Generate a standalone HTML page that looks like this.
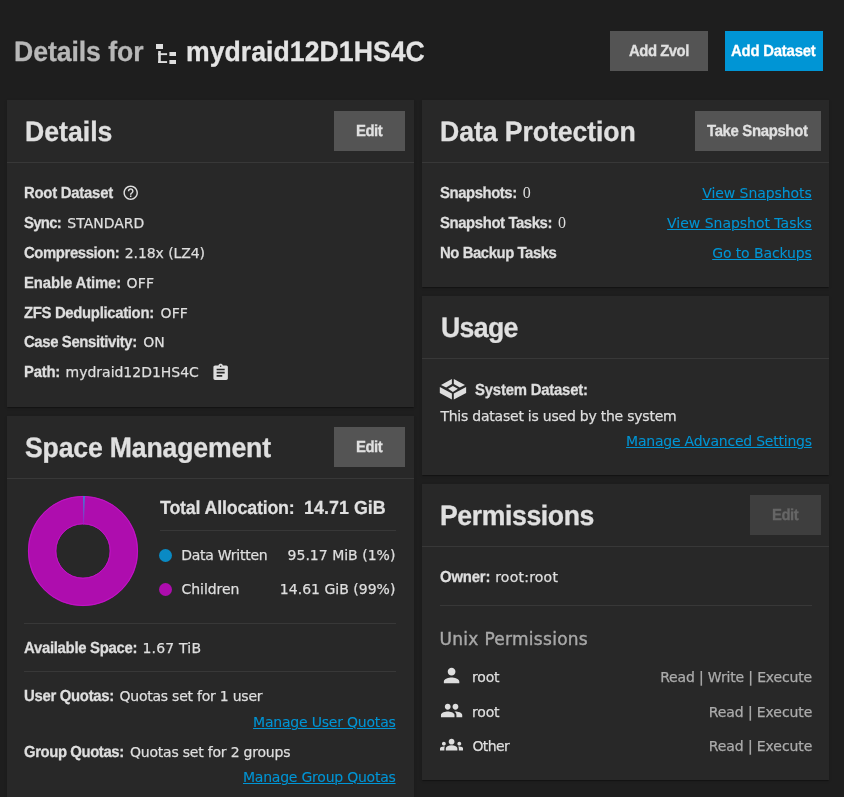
<!DOCTYPE html>
<html lang="en"><head><meta charset="utf-8"><title>Details for mydraid12D1HS4C</title>
<style>
html,body{margin:0;padding:0;}
body{width:844px;height:797px;overflow:hidden;background:#1e1e1e;position:relative;font-family:'Liberation Sans',sans-serif;}
h1,h3,h4,strong,a,i{margin:0;padding:0;font-style:normal;}
.r{position:absolute;display:block;box-sizing:border-box;margin:0;padding:0;}
.t{position:absolute;display:block;white-space:nowrap;line-height:20px;}
#w{position:absolute;left:0;top:0;width:844px;height:797px;will-change:transform;}
.card{background:#282828;box-shadow:0 2px 1px -1px rgba(0,0,0,.2),0 1px 1px 0 rgba(0,0,0,.14),0 1px 3px 0 rgba(0,0,0,.12);}
.b{border:0;border-radius:0;cursor:pointer;font:inherit;overflow:visible;}
.b[disabled]{cursor:default;}
a{cursor:pointer;}
</style></head><body><main id="w">
  <header class="r" style="left:0px;top:20px;width:844px;height:70px;">
    <h1 class="r" style="left:10px;top:16px;width:430px;height:40px;">
      <span class="t" style="left:3.77px;top:6px;font-family:'Liberation Sans',sans-serif;font-size:28px;color:#b8b8b8;font-weight:700;text-rendering:geometricPrecision;letter-spacing:-0.061px;transform-origin:0 0;transform:scaleX(0.95);-webkit-text-stroke:0.3px #b8b8b8;">Details for</span>
      <svg class="r" style="left:140px;top:0px" width="36" height="34" viewBox="150 36 36 34" aria-hidden="true"><g fill="#dedede"><rect x="156" y="44" width="7" height="5"/><rect x="158.2" y="51" width="2.6" height="12"/><rect x="158.2" y="53.2" width="8.9" height="1.9"/><rect x="158.2" y="61.1" width="8.9" height="1.9"/><rect x="169.4" y="52" width="6.6" height="4"/><rect x="169.4" y="60" width="6.6" height="4"/></g></svg>
      <span class="t" style="left:176.17px;top:6px;font-family:'Liberation Sans',sans-serif;font-size:28px;color:#e4e4e4;font-weight:700;text-rendering:geometricPrecision;letter-spacing:0.055px;transform-origin:0 0;transform:scaleX(0.95);-webkit-text-stroke:0.3px #e4e4e4;">mydraid12D1HS4C</span>
    </h1>
    <button class="r b" type="button" style="left:610px;top:11px;width:98px;height:40px;background:#545454;">
      <span class="t" style="left:18.7px;top:11px;font-family:'Liberation Sans',sans-serif;font-size:16px;color:#e0e0e0;font-weight:700;text-rendering:geometricPrecision;letter-spacing:-0.505px;transform-origin:0 0;transform:scaleX(0.93);-webkit-text-stroke:0.3px #e0e0e0;">Add Zvol</span>
    </button>
    <button class="r b" type="button" style="left:725px;top:11px;width:98px;height:40px;background:#0095d5;">
      <span class="t" style="left:6.3px;top:11px;font-family:'Liberation Sans',sans-serif;font-size:16px;color:#ffffff;font-weight:700;text-rendering:geometricPrecision;letter-spacing:-0.219px;transform-origin:0 0;transform:scaleX(0.93);-webkit-text-stroke:0.3px #ffffff;">Add Dataset</span>
    </button>
  </header>
  <section class="r card" style="left:7px;top:100px;width:407px;height:307px;">
    <h3 class="t" style="left:18.07px;top:22px;font-family:'Liberation Sans',sans-serif;font-size:28px;color:#e0e0e0;font-weight:700;text-rendering:geometricPrecision;letter-spacing:0.032px;transform-origin:0 0;transform:scaleX(0.95);-webkit-text-stroke:0.3px #e0e0e0;">Details</h3>
    <div class="r" style="left:0px;top:62px;width:407px;height:1px;background:#383838;"></div>
    <button class="r b" type="button" style="left:327px;top:11px;width:71px;height:40px;background:#545454;">
      <span class="t" style="left:21.62px;top:11px;font-family:'Liberation Sans',sans-serif;font-size:16px;color:#e0e0e0;font-weight:700;text-rendering:geometricPrecision;letter-spacing:-0.519px;transform-origin:0 0;transform:scaleX(0.93);-webkit-text-stroke:0.3px #e0e0e0;">Edit</span>
    </button>
    <div class="r row" style="left:17px;top:83px;width:372px;height:20px;">
      <strong class="t" style="left:-0.28px;top:1px;font-family:'Liberation Sans',sans-serif;font-size:16px;color:#dedede;font-weight:700;text-rendering:geometricPrecision;letter-spacing:-0.259px;transform-origin:0 0;transform:scaleX(0.93);-webkit-text-stroke:0.3px #dedede;">Root Dataset</strong>
      <svg class="r" style="left:98.2px;top:0.9px" width="17.4" height="17.4" viewBox="0 0 24 24" aria-hidden="true"><path fill="#dedede" d="M11 18h2v-2h-2v2zm1-16C6.48 2 2 6.48 2 12s4.48 10 10 10 10-4.48 10-10S17.52 2 12 2zm0 18c-4.41 0-8-3.59-8-8s3.59-8 8-8 8 3.59 8 8-3.590 8-8 8zm0-14c-2.210 0-4 1.790-4 4h2c0-1.100.9-2 2-2s2 .9 2 2c0 2-3 1.750-3 5h2c0-2.250 3-2.500 3-5 0-2.210-1.790-4-4-4z"/></svg>
    </div>
    <div class="r row" style="left:17px;top:113px;width:372px;height:20px;">
      <strong class="t" style="left:0.18px;top:1px;font-family:'Liberation Sans',sans-serif;font-size:16px;color:#dedede;font-weight:700;text-rendering:geometricPrecision;letter-spacing:-0.773px;transform-origin:0 0;transform:scaleX(0.93);-webkit-text-stroke:0.3px #dedede;">Sync:</strong>
      <span class="t" style="left:43.35px;top:0px;font-family:'DejaVu Sans','Liberation Sans',sans-serif;font-size:14px;color:#dedede;font-weight:400;-webkit-text-stroke:0.25px #dedede;">STANDARD</span>
    </div>
    <div class="r row" style="left:17px;top:143px;width:372px;height:20px;">
      <strong class="t" style="left:0.07px;top:1px;font-family:'Liberation Sans',sans-serif;font-size:16px;color:#dedede;font-weight:700;text-rendering:geometricPrecision;letter-spacing:-0.428px;transform-origin:0 0;transform:scaleX(0.93);-webkit-text-stroke:0.3px #dedede;">Compression:</strong>
      <span class="t" style="left:100.73px;top:0px;font-family:'DejaVu Sans','Liberation Sans',sans-serif;font-size:14px;color:#dedede;font-weight:400;letter-spacing:-0.083px;-webkit-text-stroke:0.25px #dedede;">2.18x (LZ4)</span>
    </div>
    <div class="r row" style="left:17px;top:173px;width:372px;height:20px;">
      <strong class="t" style="left:-0.28px;top:1px;font-family:'Liberation Sans',sans-serif;font-size:16px;color:#dedede;font-weight:700;text-rendering:geometricPrecision;letter-spacing:-0.130px;transform-origin:0 0;transform:scaleX(0.93);-webkit-text-stroke:0.3px #dedede;">Enable Atime:</strong>
      <span class="t" style="left:102.48px;top:0px;font-family:'DejaVu Sans','Liberation Sans',sans-serif;font-size:14px;color:#dedede;font-weight:400;letter-spacing:0.212px;-webkit-text-stroke:0.25px #dedede;">OFF</span>
    </div>
    <div class="r row" style="left:17px;top:203px;width:372px;height:20px;">
      <strong class="t" style="left:0.18px;top:1px;font-family:'Liberation Sans',sans-serif;font-size:16px;color:#dedede;font-weight:700;text-rendering:geometricPrecision;letter-spacing:-0.346px;transform-origin:0 0;transform:scaleX(0.93);-webkit-text-stroke:0.3px #dedede;">ZFS Deduplication:</strong>
      <span class="t" style="left:136.58px;top:0px;font-family:'DejaVu Sans','Liberation Sans',sans-serif;font-size:14px;color:#dedede;font-weight:400;letter-spacing:0.112px;-webkit-text-stroke:0.25px #dedede;">OFF</span>
    </div>
    <div class="r row" style="left:17px;top:232px;width:372px;height:20px;">
      <strong class="t" style="left:0.07px;top:1px;font-family:'Liberation Sans',sans-serif;font-size:16px;color:#dedede;font-weight:700;text-rendering:geometricPrecision;letter-spacing:-0.399px;transform-origin:0 0;transform:scaleX(0.93);-webkit-text-stroke:0.3px #dedede;">Case Sensitivity:</strong>
      <span class="t" style="left:119.18px;top:0px;font-family:'DejaVu Sans','Liberation Sans',sans-serif;font-size:14px;color:#dedede;font-weight:400;letter-spacing:-0.025px;-webkit-text-stroke:0.25px #dedede;">ON</span>
    </div>
    <div class="r row" style="left:17px;top:262px;width:372px;height:20px;">
      <strong class="t" style="left:-0.28px;top:1px;font-family:'Liberation Sans',sans-serif;font-size:16px;color:#dedede;font-weight:700;text-rendering:geometricPrecision;letter-spacing:-0.256px;transform-origin:0 0;transform:scaleX(0.93);-webkit-text-stroke:0.3px #dedede;">Path:</strong>
      <span class="t" style="left:41.58px;top:0px;font-family:'DejaVu Sans','Liberation Sans',sans-serif;font-size:14px;color:#dedede;font-weight:400;letter-spacing:-0.018px;-webkit-text-stroke:0.25px #dedede;">mydraid12D1HS4C</span>
      <svg class="r" style="left:187.3px;top:0.5px" width="19.3" height="19.3" viewBox="0 0 24 24" aria-hidden="true"><path fill="#dedede" d="M19 3h-4.180C14.400 1.840 13.300 1 12 1c-1.300 0-2.400.840-2.820 2H5c-1.100 0-2 .9-2 2v14c0 1.100.9 2 2 2h14c1.100 0 2-.9 2-2V5c0-1.100-.9-2-2-2zm-7 0c.550 0 1 .450 1 1s-.450 1-1 1-1-.450-1-1 .450-1 1-1zm2 14H7v-2h7v2zm3-4H7v-2h10v2zm0-4H7V7h10v2z"/></svg>
    </div>
  </section>
  <section class="r card" style="left:7px;top:416px;width:407px;height:400px;">
    <h3 class="t" style="left:18.22px;top:22px;font-family:'Liberation Sans',sans-serif;font-size:28px;color:#e0e0e0;font-weight:700;text-rendering:geometricPrecision;letter-spacing:-0.163px;transform-origin:0 0;transform:scaleX(0.95);-webkit-text-stroke:0.3px #e0e0e0;">Space Management</h3>
    <div class="r" style="left:0px;top:62px;width:407px;height:1px;background:#383838;"></div>
    <button class="r b" type="button" style="left:327px;top:11px;width:71px;height:40px;background:#545454;">
      <span class="t" style="left:21.62px;top:11px;font-family:'Liberation Sans',sans-serif;font-size:16px;color:#e0e0e0;font-weight:700;text-rendering:geometricPrecision;letter-spacing:-0.519px;transform-origin:0 0;transform:scaleX(0.93);-webkit-text-stroke:0.3px #e0e0e0;">Edit</span>
    </button>
    <svg class="r" style="left:16px;top:75px" width="120" height="120" viewBox="23 491 120 120" aria-hidden="true"><defs><linearGradient id="sl" x1="0" y1="0" x2="0" y2="1"><stop offset="0" stop-color="#3a80d0"/><stop offset="0.5" stop-color="#6a55c8"/><stop offset="1" stop-color="#a01cc0"/></linearGradient></defs>
<circle cx="83" cy="551" r="40.9" fill="none" stroke="#ae0dae" stroke-width="28.3"/>
<circle cx="83" cy="551" r="54.6" fill="none" stroke="#c414ca" stroke-width="0.9"/>
<circle cx="83" cy="551" r="27.2" fill="none" stroke="#c414ca" stroke-width="0.9"/>
<path d="M83.05 496 L84.95 496.05 L83.9 524.4 L83.05 524.4 Z" fill="url(#sl)"/></svg>
    <div class="r legend" style="left:152px;top:80px;width:238px;height:106px;">
      <strong class="t" style="left:0.76px;top:3px;font-family:'Liberation Sans',sans-serif;font-size:19px;color:#e0e0e0;font-weight:700;text-rendering:geometricPrecision;letter-spacing:-0.208px;transform-origin:0 0;transform:scaleX(0.94);-webkit-text-stroke:0.2px #e0e0e0;">Total Allocation:</strong>
      <strong class="t" style="left:144.94px;top:3px;font-family:'Liberation Sans',sans-serif;font-size:19px;color:#e0e0e0;font-weight:700;text-rendering:geometricPrecision;letter-spacing:0.048px;transform-origin:0 0;transform:scaleX(0.94);-webkit-text-stroke:0.2px #e0e0e0;">14.71 GiB</strong>
      <div class="r" style="left:1px;top:34px;width:236px;height:1px;background:#383838;"></div>
      <i class="r" style="left:0.2px;top:52.7px;width:13px;height:13px;background:#0a8ac4;border-radius:50%;"></i>
      <i class="r" style="left:0.2px;top:86.6px;width:13px;height:13px;background:#ae0dae;border-radius:50%;"></i>
      <span class="t" style="left:22.15px;top:49px;font-family:'DejaVu Sans','Liberation Sans',sans-serif;font-size:14px;color:#dedede;font-weight:400;letter-spacing:-0.243px;-webkit-text-stroke:0.25px #dedede;">Data Written</span>
      <span class="t" style="left:128.55px;top:49px;font-family:'DejaVu Sans','Liberation Sans',sans-serif;font-size:14px;color:#dedede;font-weight:400;letter-spacing:0.010px;-webkit-text-stroke:0.25px #dedede;">95.17 MiB (1%)</span>
      <span class="t" style="left:22.58px;top:83px;font-family:'DejaVu Sans','Liberation Sans',sans-serif;font-size:14px;color:#dedede;font-weight:400;letter-spacing:-0.075px;-webkit-text-stroke:0.25px #dedede;">Children</span>
      <span class="t" style="left:120.82px;top:83px;font-family:'DejaVu Sans','Liberation Sans',sans-serif;font-size:14px;color:#dedede;font-weight:400;letter-spacing:0.016px;-webkit-text-stroke:0.25px #dedede;">14.61 GiB (99%)</span>
    </div>
    <div class="r" style="left:17px;top:207px;width:372px;height:1px;background:#383838;"></div>
    <div class="r row" style="left:17px;top:222px;width:372px;height:20px;">
      <strong class="t" style="left:0.3px;top:1px;font-family:'Liberation Sans',sans-serif;font-size:16px;color:#dedede;font-weight:700;text-rendering:geometricPrecision;letter-spacing:-0.307px;transform-origin:0 0;transform:scaleX(0.93);-webkit-text-stroke:0.3px #dedede;">Available Space:</strong>
      <span class="t" style="left:118.43px;top:0px;font-family:'DejaVu Sans','Liberation Sans',sans-serif;font-size:14px;color:#dedede;font-weight:400;letter-spacing:0.200px;-webkit-text-stroke:0.25px #dedede;">1.67 TiB</span>
    </div>
    <div class="r" style="left:17px;top:255px;width:372px;height:1px;background:#383838;"></div>
    <div class="r row" style="left:17px;top:270px;width:372px;height:50px;">
      <strong class="t" style="left:-0.28px;top:1px;font-family:'Liberation Sans',sans-serif;font-size:16px;color:#dedede;font-weight:700;text-rendering:geometricPrecision;letter-spacing:-0.315px;transform-origin:0 0;transform:scaleX(0.93);-webkit-text-stroke:0.3px #dedede;">User Quotas:</strong>
      <span class="t" style="left:95.48px;top:0px;font-family:'DejaVu Sans','Liberation Sans',sans-serif;font-size:14px;color:#dedede;font-weight:400;letter-spacing:-0.232px;-webkit-text-stroke:0.25px #dedede;">Quotas set for 1 user</span>
      <a class="t" style="left:229.1px;top:26px;font-family:'DejaVu Sans','Liberation Sans',sans-serif;font-size:14px;color:#0095d5;font-weight:400;letter-spacing:-0.208px;-webkit-text-stroke:0.08px #0095d5;text-decoration:underline;text-decoration-thickness:1.4px;">Manage User Quotas</a>
    </div>
    <div class="r row" style="left:17px;top:326px;width:372px;height:50px;">
      <strong class="t" style="left:0.07px;top:1px;font-family:'Liberation Sans',sans-serif;font-size:16px;color:#dedede;font-weight:700;text-rendering:geometricPrecision;letter-spacing:-0.437px;transform-origin:0 0;transform:scaleX(0.93);-webkit-text-stroke:0.3px #dedede;">Group Quotas:</strong>
      <span class="t" style="left:105.97px;top:0px;font-family:'DejaVu Sans','Liberation Sans',sans-serif;font-size:14px;color:#dedede;font-weight:400;letter-spacing:-0.209px;-webkit-text-stroke:0.25px #dedede;">Quotas set for 2 groups</span>
      <a class="t" style="left:219px;top:25px;font-family:'DejaVu Sans','Liberation Sans',sans-serif;font-size:14px;color:#0095d5;font-weight:400;letter-spacing:-0.229px;-webkit-text-stroke:0.08px #0095d5;text-decoration:underline;text-decoration-thickness:1.4px;">Manage Group Quotas</a>
    </div>
  </section>
  <section class="r card" style="left:422px;top:100px;width:407px;height:187px;">
    <h3 class="t" style="left:18.37px;top:22px;font-family:'Liberation Sans',sans-serif;font-size:28px;color:#e0e0e0;font-weight:700;text-rendering:geometricPrecision;letter-spacing:-0.059px;transform-origin:0 0;transform:scaleX(0.95);-webkit-text-stroke:0.3px #e0e0e0;">Data Protection</h3>
    <div class="r" style="left:0px;top:62px;width:407px;height:1px;background:#383838;"></div>
    <button class="r b" type="button" style="left:273px;top:11px;width:126px;height:40px;background:#545454;">
      <span class="t" style="left:11.83px;top:11px;font-family:'Liberation Sans',sans-serif;font-size:16px;color:#e0e0e0;font-weight:700;text-rendering:geometricPrecision;letter-spacing:-0.347px;transform-origin:0 0;transform:scaleX(0.93);-webkit-text-stroke:0.3px #e0e0e0;">Take Snapshot</span>
    </button>
    <div class="r row" style="left:18px;top:83px;width:372px;height:20px;">
      <strong class="t" style="left:-0.12px;top:1px;font-family:'Liberation Sans',sans-serif;font-size:16px;color:#dedede;font-weight:700;text-rendering:geometricPrecision;letter-spacing:-0.459px;transform-origin:0 0;transform:scaleX(0.93);-webkit-text-stroke:0.3px #dedede;">Snapshots:</strong>
      <span class="t" style="left:82.67px;top:0px;font-family:'Liberation Serif',serif;font-size:16px;color:#dedede;font-weight:400;">0</span>
      <a class="t" style="left:262.2px;top:0px;font-family:'DejaVu Sans','Liberation Sans',sans-serif;font-size:14px;color:#0095d5;font-weight:400;letter-spacing:-0.059px;-webkit-text-stroke:0.08px #0095d5;text-decoration:underline;text-decoration-thickness:1.4px;">View Snapshots</a>
    </div>
    <div class="r row" style="left:18px;top:113px;width:372px;height:20px;">
      <strong class="t" style="left:-0.12px;top:1px;font-family:'Liberation Sans',sans-serif;font-size:16px;color:#dedede;font-weight:700;text-rendering:geometricPrecision;letter-spacing:-0.423px;transform-origin:0 0;transform:scaleX(0.93);-webkit-text-stroke:0.3px #dedede;">Snapshot Tasks:</strong>
      <span class="t" style="left:117.98px;top:0px;font-family:'Liberation Serif',serif;font-size:16px;color:#dedede;font-weight:400;">0</span>
      <a class="t" style="left:227.1px;top:0px;font-family:'DejaVu Sans','Liberation Sans',sans-serif;font-size:14px;color:#0095d5;font-weight:400;letter-spacing:-0.021px;-webkit-text-stroke:0.08px #0095d5;text-decoration:underline;text-decoration-thickness:1.4px;">View Snapshot Tasks</a>
    </div>
    <div class="r row" style="left:18px;top:143px;width:372px;height:20px;">
      <strong class="t" style="left:-0.38px;top:1px;font-family:'Liberation Sans',sans-serif;font-size:16px;color:#dedede;font-weight:700;text-rendering:geometricPrecision;letter-spacing:-0.465px;transform-origin:0 0;transform:scaleX(0.93);-webkit-text-stroke:0.3px #dedede;">No Backup Tasks</strong>
      <a class="t" style="left:272.2px;top:0px;font-family:'DejaVu Sans','Liberation Sans',sans-serif;font-size:14px;color:#0095d5;font-weight:400;letter-spacing:-0.106px;-webkit-text-stroke:0.08px #0095d5;text-decoration:underline;text-decoration-thickness:1.4px;">Go to Backups</a>
    </div>
  </section>
  <section class="r card" style="left:422px;top:296px;width:407px;height:179px;">
    <h3 class="t" style="left:18.51px;top:22px;font-family:'Liberation Sans',sans-serif;font-size:28px;color:#e0e0e0;font-weight:700;text-rendering:geometricPrecision;letter-spacing:-0.661px;transform-origin:0 0;transform:scaleX(0.95);-webkit-text-stroke:0.3px #e0e0e0;">Usage</h3>
    <div class="r" style="left:0px;top:62px;width:407px;height:1px;background:#383838;"></div>
    <div class="r row" style="left:10px;top:76px;width:380px;height:36px;">
      <svg class="r" style="left:0px;top:0px" width="40" height="36" viewBox="432 372 40 36" aria-hidden="true"><g fill="#dedede"><polygon points="441,384.9 451.9,378.9 451.9,384 446.2,387.6"/><polygon points="453.8,378.9 465,384.9 459.8,387.6 453.8,384"/><polygon points="452.9,386 457.9,388.8 452.9,391.9 448.1,388.8"/><polygon points="439.8,386.9 451.9,393.6 451.9,399.5 439.8,392.9"/><polygon points="453.8,393.6 466.1,386.9 466.1,392.9 453.8,399.5"/></g></svg>
      <strong class="t" style="left:43.29px;top:9px;font-family:'Liberation Sans',sans-serif;font-size:16px;color:#dedede;font-weight:700;text-rendering:geometricPrecision;letter-spacing:-0.215px;transform-origin:0 0;transform:scaleX(0.93);-webkit-text-stroke:0.3px #dedede;">System Dataset:</strong>
    </div>
    <div class="r row" style="left:18px;top:110px;width:372px;height:50px;">
      <span class="t" style="left:0.42px;top:0px;font-family:'DejaVu Sans','Liberation Sans',sans-serif;font-size:14px;color:#dedede;font-weight:400;letter-spacing:-0.230px;-webkit-text-stroke:0.25px #dedede;">This dataset is used by the system</span>
      <a class="t" style="left:186.1px;top:25px;font-family:'DejaVu Sans','Liberation Sans',sans-serif;font-size:14px;color:#0095d5;font-weight:400;letter-spacing:-0.225px;-webkit-text-stroke:0.08px #0095d5;text-decoration:underline;text-decoration-thickness:1.4px;">Manage Advanced Settings</a>
    </div>
  </section>
  <section class="r card" style="left:422px;top:484px;width:407px;height:296px;">
    <h3 class="t" style="left:18.27px;top:22px;font-family:'Liberation Sans',sans-serif;font-size:28px;color:#e0e0e0;font-weight:700;text-rendering:geometricPrecision;letter-spacing:-0.401px;transform-origin:0 0;transform:scaleX(0.95);-webkit-text-stroke:0.3px #e0e0e0;">Permissions</h3>
    <div class="r" style="left:0px;top:62px;width:407px;height:1px;background:#383838;"></div>
    <button class="r b" type="button" disabled style="left:328px;top:11px;width:71px;height:40px;background:#3e3e3e;">
      <span class="t" style="left:21.62px;top:11px;font-family:'Liberation Sans',sans-serif;font-size:16px;color:#666666;font-weight:700;text-rendering:geometricPrecision;letter-spacing:-0.519px;transform-origin:0 0;transform:scaleX(0.93);-webkit-text-stroke:0.3px #666666;">Edit</span>
    </button>
    <div class="r row" style="left:18px;top:83px;width:372px;height:20px;">
      <strong class="t" style="left:-0.23px;top:1px;font-family:'Liberation Sans',sans-serif;font-size:16px;color:#dedede;font-weight:700;text-rendering:geometricPrecision;letter-spacing:-0.187px;transform-origin:0 0;transform:scaleX(0.93);-webkit-text-stroke:0.3px #dedede;">Owner:</strong>
      <span class="t" style="left:55.17px;top:0px;font-family:'DejaVu Sans','Liberation Sans',sans-serif;font-size:14px;color:#dedede;font-weight:400;letter-spacing:0.238px;-webkit-text-stroke:0.25px #dedede;">root:root</span>
    </div>
    <div class="r" style="left:18px;top:121px;width:372px;height:1px;background:#383838;"></div>
    <h4 class="t" style="left:17.6px;top:145px;font-family:'DejaVu Sans','Liberation Sans',sans-serif;font-size:17px;color:#a8a8a8;font-weight:400;letter-spacing:0.278px;-webkit-text-stroke:0.4px #a8a8a8;">Unix Permissions</h4>
    <div class="r row" style="left:17px;top:180px;width:373px;height:24px;">
      <svg class="r" style="left:0.8px;top:-0.1px" width="23.2" height="23.2" viewBox="0 0 24 24" aria-hidden="true"><path fill="#dedede" d="M12 12c2.210 0 4-1.790 4-4s-1.790-4-4-4-4 1.790-4 4 1.790 4 4 4zm0 2c-2.670 0-8 1.340-8 4v2h16v-2c0-2.660-5.330-4-8-4z"/></svg>
      <span class="t" style="left:32.88px;top:3px;font-family:'DejaVu Sans','Liberation Sans',sans-serif;font-size:14px;color:#dedede;font-weight:400;letter-spacing:-0.117px;-webkit-text-stroke:0.25px #dedede;">root</span>
      <span class="t" style="left:221.15px;top:3px;font-family:'DejaVu Sans','Liberation Sans',sans-serif;font-size:14px;color:#ababab;font-weight:400;letter-spacing:-0.157px;-webkit-text-stroke:0.25px #ababab;">Read | Write | Execute</span>
    </div>
    <div class="r row" style="left:17px;top:215px;width:373px;height:24px;">
      <svg class="r" style="left:0.8px;top:-0.2px" width="23.2" height="23.2" viewBox="0 0 24 24" aria-hidden="true"><path fill="#dedede" d="M16 11c1.660 0 2.990-1.340 2.990-3S17.660 5 16 5c-1.660 0-3 1.340-3 3s1.340 3 3 3zm-8 0c1.660 0 2.990-1.340 2.990-3S9.660 5 8 5C6.340 5 5 6.340 5 8s1.340 3 3 3zm0 2c-2.330 0-7 1.170-7 3.500V19h14v-2.500c0-2.330-4.670-3.500-7-3.500zm8 0c-.290 0-.620.020-.970.050 1.160.840 1.970 1.970 1.970 3.450V19h6v-2.500c0-2.330-4.670-3.500-7-3.500z"/></svg>
      <span class="t" style="left:32.88px;top:3px;font-family:'DejaVu Sans','Liberation Sans',sans-serif;font-size:14px;color:#dedede;font-weight:400;letter-spacing:-0.117px;-webkit-text-stroke:0.25px #dedede;">root</span>
      <span class="t" style="left:269.75px;top:3px;font-family:'DejaVu Sans','Liberation Sans',sans-serif;font-size:14px;color:#ababab;font-weight:400;letter-spacing:-0.098px;-webkit-text-stroke:0.25px #ababab;">Read | Execute</span>
    </div>
    <div class="r row" style="left:17px;top:249px;width:373px;height:24px;">
      <svg class="r" style="left:0.8px;top:-0.1px" width="23.2" height="23.2" viewBox="0 0 24 24" aria-hidden="true"><path fill="#dedede" d="M12 12.750c1.630 0 3.070.390 4.240.9 1.080.480 1.760 1.560 1.760 2.730V18H6v-1.610c0-1.180.680-2.260 1.760-2.730 1.170-.520 2.610-.910 4.240-.910zM4 13c1.100 0 2-.9 2-2s-.9-2-2-2-2 .9-2 2 .9 2 2 2zm1.130 1.100c-.370-.060-.740-.1-1.130-.1-.990 0-1.930.210-2.780.580C.480 14.900 0 15.620 0 16.430V18h4.500v-1.610c0-.830.230-1.610.630-2.290zM20 13c1.100 0 2-.9 2-2s-.9-2-2-2-2 .9-2 2 .9 2 2 2zm4 3.430c0-.810-.480-1.530-1.220-1.850-.850-.370-1.790-.580-2.780-.580-.390 0-.760.040-1.130.1.400.680.630 1.460.630 2.290V18H24v-1.570zM12 6c1.660 0 3 1.340 3 3s-1.340 3-3 3-3-1.340-3-3 1.340-3 3-3z"/></svg>
      <span class="t" style="left:33.38px;top:3px;font-family:'DejaVu Sans','Liberation Sans',sans-serif;font-size:14px;color:#dedede;font-weight:400;letter-spacing:-0.562px;-webkit-text-stroke:0.25px #dedede;">Other</span>
      <span class="t" style="left:269.75px;top:3px;font-family:'DejaVu Sans','Liberation Sans',sans-serif;font-size:14px;color:#ababab;font-weight:400;letter-spacing:-0.098px;-webkit-text-stroke:0.25px #ababab;">Read | Execute</span>
    </div>
  </section>
</main></body></html>
